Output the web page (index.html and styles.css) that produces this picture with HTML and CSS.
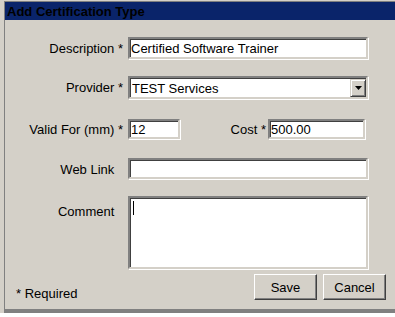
FILE: index.html
```html
<!DOCTYPE html>
<html lang="en">
<head>
  <meta charset="UTF-8">
  <meta name="viewport" content="width=device-width, initial-scale=1.0">
  <title>Add Certification Type</title>
  <link rel="stylesheet" href="styles.css">
</head>
<body>

  <div class="page">
    <div class="dialog">
      <!-- Title Bar -->
      <div class="title-bar">Add Certification Type</div>

      <form class="dialog-body" onsubmit="return false">
        <div class="row row-desc">
          <label class="label" for="desc">Description <span class="req">*</span></label>
          <input class="field wide" id="desc" type="text" value="Certified Software Trainer">
        </div>

        <div class="row row-provider">
          <label class="label" for="provider">Provider <span class="req">*</span></label>
          <div class="select-box">
            <select id="provider">
              <option>TEST Services</option>
            </select>
            <span class="drop-btn">
              <svg width="7" height="4" viewBox="0 0 7 4"><path d="M0 0h7L3.5 4z" fill="#000"/></svg>
            </span>
          </div>
        </div>

        <div class="row row-valid">
          <label class="label" for="valid">Valid For (mm) <span class="req">*</span></label>
          <input class="field small" id="valid" type="text" value="12">
          <label class="label-cost" for="cost">Cost <span class="req">*</span></label>
          <input class="field cost" id="cost" type="text" value="500.00">
        </div>

        <div class="row row-link">
          <label class="label" for="link">Web Link <span class="req hidden">*</span></label>
          <input class="field wide link" id="link" type="text" value="">
        </div>

        <div class="row row-comment">
          <label class="label label-top" for="comment">Comment <span class="req hidden">*</span></label>
          <textarea class="field comment" id="comment"></textarea>
        </div>

        <div class="footer">
          <span class="required-note">* Required</span>
          <div class="buttons">
            <button class="btn" type="submit">Save</button>
            <button class="btn" type="button">Cancel</button>
          </div>
        </div>
      </form>
    </div>
  </div>

</body>
</html>
```

FILE: styles.css
```css
body {
  margin: 0;
  padding: 0;
  background: #ffffff;
  font-family: "Liberation Sans", Arial, sans-serif;
  font-size: 13px;
  color: #000;
}

.page {
  background: #d4d0c8;
  padding: 1px 0 0 4px;
}

.dialog {
  border-top: 1px solid #808080;
  border-left: 1px solid #808080;
  border-bottom: 4px solid #808080;
  background: #d4d0c8;
}

.title-bar {
  background: #0a246a;
  color: #000;
  font-weight: bold;
  font-size: 13px;
  height: 18px;
  line-height: 19px;
  padding-left: 2px;
}

.dialog-body {
  display: flex;
  flex-direction: column;
  padding: 17px 9px 9px 0;
  margin: 0;
}

.row {
  display: flex;
  align-items: center;
}

.row-provider {
  margin-top: 17px;
}

.row-valid {
  margin-top: 20px;
}

.row-link {
  margin-top: 19px;
}

.row-comment {
  margin-top: 17px;
  align-items: flex-start;
}

.label {
  width: 123px;
  padding-right: 5px;
  box-sizing: border-box;
  text-align: right;
  flex-shrink: 0;
}

.row-link .label {
  padding-top: 2px;
}

.label-top {
  padding-top: 8px;
}

.req.hidden {
  visibility: hidden;
}

.field {
  font-family: "Liberation Sans", Arial, sans-serif;
  font-size: 13px;
  color: #000;
  background: #fff;
  border: 2px solid;
  border-color: #808080 #d4d0c8 #d4d0c8 #808080;
  box-shadow: inset 1px 1px 0 #404040, 1px 1px 0 #fff;
  padding: 0 1px;
  margin: 0;
  box-sizing: border-box;
  outline: none;
}

.field.wide {
  width: 240px;
  height: 22px;
}

.field.link {
  height: 21px;
}

.field.small {
  width: 52px;
  height: 20px;
}

.label-cost {
  width: 88px;
  padding-right: 2px;
  box-sizing: border-box;
  text-align: right;
}

.field.cost {
  width: 97px;
  height: 20px;
}

.field.comment {
  width: 240px;
  height: 73px;
  resize: none;
  padding: 1px 2px;
  background: #fff linear-gradient(#000, #000) no-repeat 3px 3px / 1px 14px;
}

/* Provider dropdown */
.select-box {
  width: 240px;
  height: 23px;
  display: flex;
  background: #fff;
  border: 2px solid;
  border-color: #808080 #d4d0c8 #d4d0c8 #808080;
  box-shadow: inset 1px 1px 0 #404040, 1px 1px 0 #fff;
  box-sizing: border-box;
}

.select-box select {
  flex: 1;
  -webkit-appearance: none;
  appearance: none;
  border: none;
  background: transparent;
  font-family: "Liberation Sans", Arial, sans-serif;
  font-size: 13px;
  color: #000;
  padding: 0 1px;
  margin: 1px 0 0 1px;
  outline: none;
}

.drop-btn {
  width: 16px;
  margin: 1px 0 0 0;
  background: #d4d0c8;
  border: 1px solid;
  border-color: #d4d0c8 #404040 #404040 #d4d0c8;
  box-shadow: inset 1px 1px 0 #fff, inset -1px -1px 0 #808080;
  box-sizing: border-box;
  display: flex;
  align-items: center;
  justify-content: center;
}

/* Footer */
.footer {
  display: flex;
  justify-content: space-between;
  align-items: flex-end;
  margin-top: 5px;
}

.required-note {
  padding-left: 11px;
  margin-bottom: -1px;
}

.buttons {
  display: flex;
  gap: 6px;
}

.btn {
  width: 63px;
  height: 26px;
  font-family: "Liberation Sans", Arial, sans-serif;
  font-size: 13px;
  color: #000;
  background: #d4d0c8;
  border: 1px solid;
  border-color: #fff #404040 #404040 #fff;
  box-shadow: inset -1px -1px 0 #808080;
  padding: 0;
  cursor: pointer;
}
```
